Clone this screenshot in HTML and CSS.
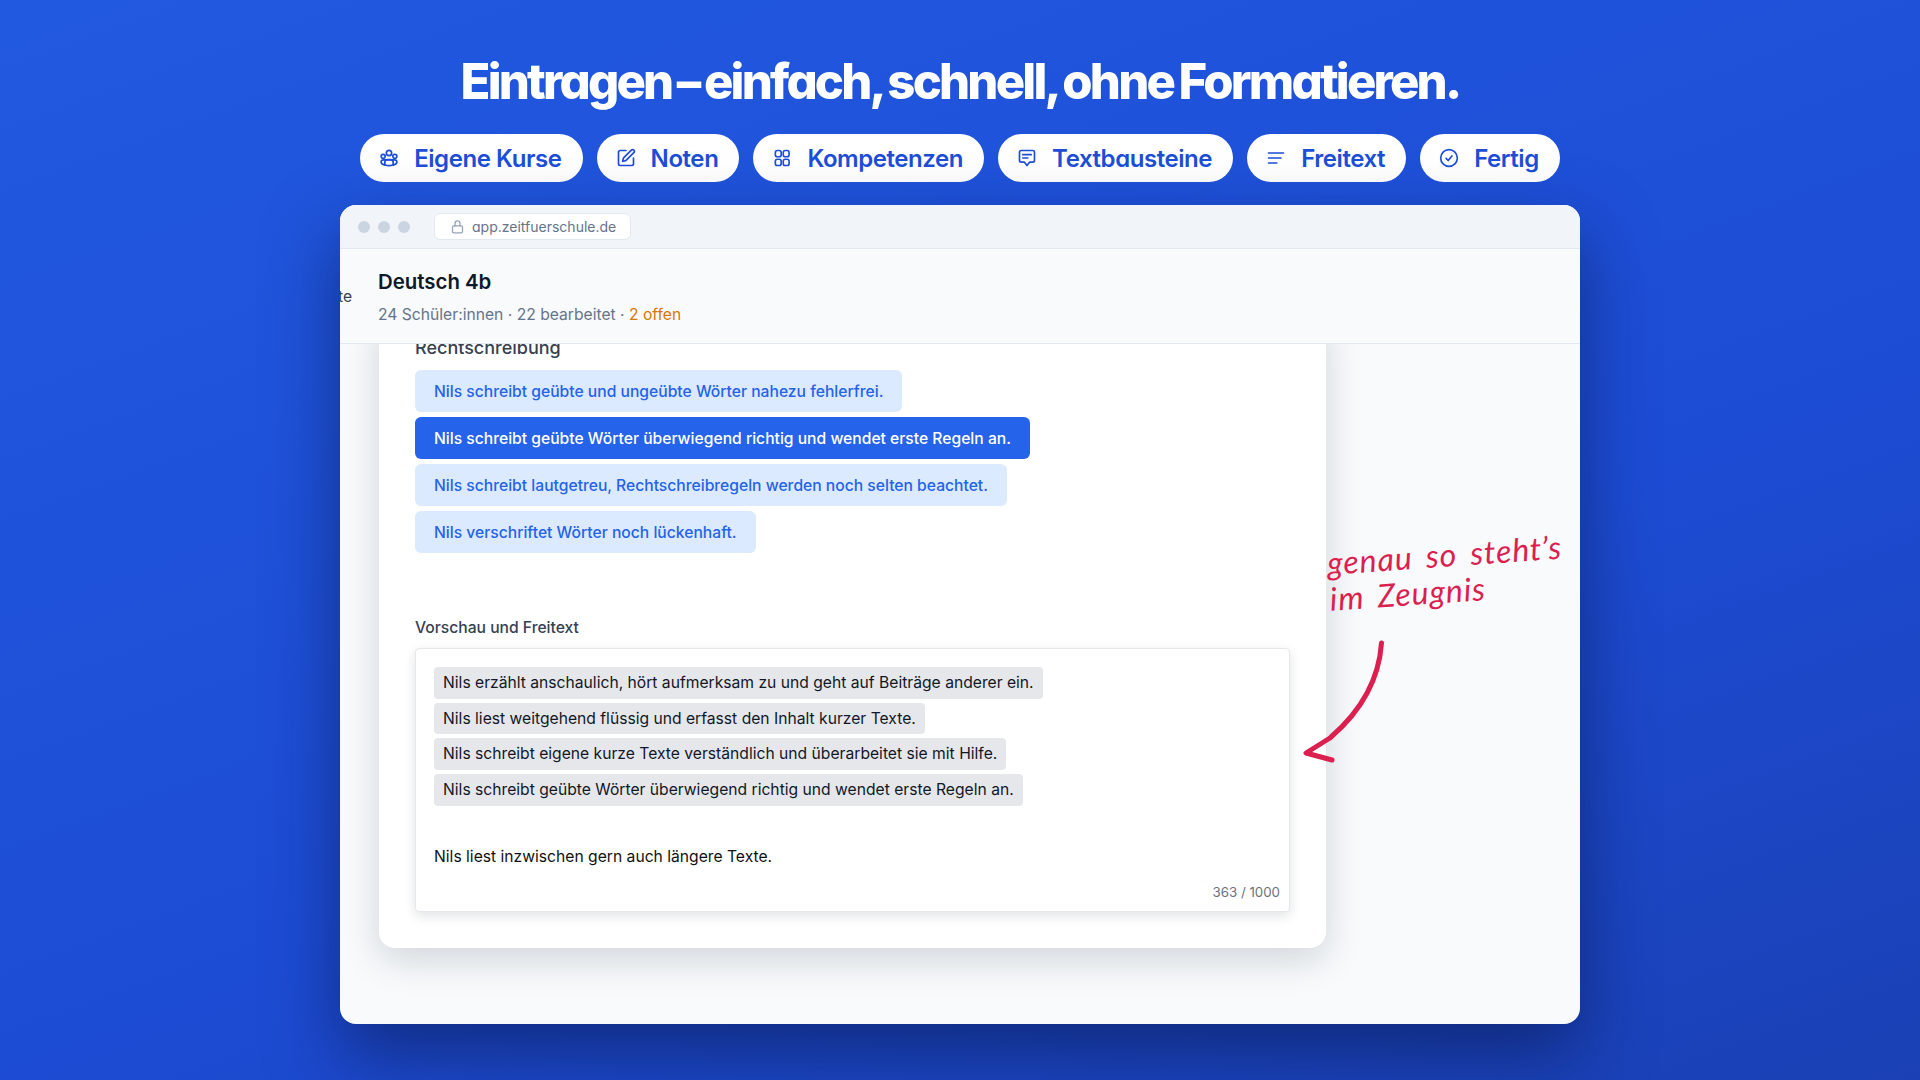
FILE: index.html
```html
<!DOCTYPE html>
<html lang="de">
<head>
  <meta charset="UTF-8">
  <title>Zeit für Schule</title>
  <link rel="stylesheet" href="styles.css">
</head>
<body>
  <h1 class="headline">Eintragen – einfach, schnell, ohne Formatieren.</h1>

  <nav class="steps">
    <span class="step">
      <svg class="step-icon" viewBox="0 0 24 24"><circle cx="12" cy="6" r="3.2"/><circle cx="5" cy="10" r="2.4"/><circle cx="19" cy="10" r="2.4"/><path d="M7 20.5c-2.5-.5-4.5-1.5-4.5-3.6 0-1.6 1.4-2.6 3-2.6h13c1.600 0 3 1 3 2.600 0 2.100-2 3.100-4.500 3.600"/><path d="M7 20v-3a3 3 0 0 1 3-3h4a3 3 0 0 1 3 3v3c-3 1.500-7 1.500-10 0z"/></svg>
      Eigene Kurse
    </span>
    <span class="step">
      <svg class="step-icon" viewBox="0 0 24 24"><path d="M12 3H5a2 2 0 0 0-2 2v14a2 2 0 0 0 2 2h14a2 2 0 0 0 2-2v-7"/><path d="M18.375 2.625a1 1 0 0 1 3 3l-9.013 9.014a2 2 0 0 1-.853.505l-2.873.84a.5.5 0 0 1-.62-.62l.84-2.873a2 2 0 0 1 .506-.852z"/></svg>
      Noten
    </span>
    <span class="step">
      <svg class="step-icon" viewBox="0 0 24 24"><rect x="4" y="3" width="7" height="7.500" rx="2.500"/><rect x="13.500" y="3" width="7" height="7.500" rx="2.500"/><rect x="4" y="13.500" width="7" height="7.500" rx="2.500"/><rect x="13.500" y="13.500" width="7" height="7.500" rx="2.500"/></svg>
      Kompetenzen
    </span>
    <span class="step">
      <svg class="step-icon" viewBox="0 0 24 24"><path d="M5 3h14a2 2 0 0 1 2 2v10a2 2 0 0 1-2 2h-4l-3 4-3-4H5a2 2 0 0 1-2-2V5a2 2 0 0 1 2-2z"/><path d="M7 8h10M7 12h6"/></svg>
      Textbausteine
    </span>
    <span class="step">
      <svg class="step-icon" viewBox="0 0 24 24"><path d="M3 6h18M3 12h15M3 18h10"/></svg>
      Freitext
    </span>
    <span class="step">
      <svg class="step-icon" viewBox="0 0 24 24"><circle cx="12" cy="12" r="10"/><path d="M8.500 12.500l2.500 2.500 4.500-5.500"/></svg>
      Fertig
    </span>
  </nav>

  <main class="window">
    <div class="titlebar">
      <span class="dot"></span>
      <span class="dot"></span>
      <span class="dot"></span>
      <span class="url">
        <svg class="lock" viewBox="0 0 24 24"><rect x="4" y="11" width="16" height="11" rx="2"/><path d="M8 11V7a4 4 0 0 1 8 0v4"/></svg>
        app.zeitfuerschule.de
      </span>
    </div>

    <header class="class-header">
      <span class="side-stub">te</span>
      <div class="class-title">Deutsch 4b</div>
      <div class="class-meta">24 Schüler:innen · 22 bearbeitet · <span class="open-count">2 offen</span></div>
    </header>

    <section class="content">
      <div class="card">
        <div class="group-label">Rechtschreibung</div>
        <div class="options">
          <button class="option">Nils schreibt geübte und ungeübte Wörter nahezu fehlerfrei.</button>
          <button class="option active">Nils schreibt geübte Wörter überwiegend richtig und wendet erste Regeln an.</button>
          <button class="option">Nils schreibt lautgetreu, Rechtschreibregeln werden noch selten beachtet.</button>
          <button class="option">Nils verschriftet Wörter noch lückenhaft.</button>
        </div>

        <div class="preview-label">Vorschau und Freitext</div>
        <div class="preview">
          <div class="chips">
            <span class="chip">Nils erzählt anschaulich, hört aufmerksam zu und geht auf Beiträge anderer ein.</span>
            <span class="chip">Nils liest weitgehend flüssig und erfasst den Inhalt kurzer Texte.</span>
            <span class="chip">Nils schreibt eigene kurze Texte verständlich und überarbeitet sie mit Hilfe.</span>
            <span class="chip">Nils schreibt geübte Wörter überwiegend richtig und wendet erste Regeln an.</span>
          </div>
          <p class="freetext">Nils liest inzwischen gern auch längere Texte.</p>
          <div class="counter">363 / 1000</div>
        </div>
      </div>
    </section>

    <div class="note">genau so steht’s<br>im Zeugnis</div>
    <svg class="note-arrow" viewBox="0 0 90 130">
      <path d="M78.500 4C76 40 58 72 28 98"/>
      <path d="M27 99 3 114 29 121"/>
    </svg>
  </main>
</body>
</html>
```

FILE: styles.css
```css
* {
  box-sizing: border-box;
}
body {
  margin: 0;
  height: 1080px;
  overflow: hidden;
  display: flex;
  flex-direction: column;
  align-items: center;
  font-family: Inter, "Liberation Sans", sans-serif;
  background: linear-gradient(160deg, #2159e0 0%, #1d4cd4 60%, #1a40b4 100%);
}
.headline {
  margin: 50px 0 0;
  height: 64px;
  line-height: 64px;
  font-size: 49px;
  font-weight: 800;
  letter-spacing: -0.057em;
  word-spacing: -2.500px;
  font-feature-settings: "cv11";
  color: #fff;
}
.steps {
  display: flex;
  gap: 14px;
  margin-top: 20px;
}
.step {
  display: flex;
  align-items: center;
  gap: 15px;
  height: 48px;
  padding: 0 21px 0 19px;
  border-radius: 24px;
  background: #fff;
  color: #1d4ed8;
  font-size: 24px;
  font-weight: 600;
  letter-spacing: -0.018em;
  font-feature-settings: "cv11";
}
.step-icon {
  width: 20px;
  height: 20px;
  fill: none;
  stroke: currentColor;
  stroke-width: 2;
  stroke-linecap: round;
  stroke-linejoin: round;
}
.window {
  position: relative;
  width: 1240px;
  height: 819px;
  margin-top: 23px;
  border-radius: 16px;
  overflow: hidden;
  background: #f8fafc;
  box-shadow: 0 30px 70px rgba(8, 20, 70, 0.55);
  display: flex;
  flex-direction: column;
}
.titlebar {
  display: flex;
  align-items: center;
  gap: 8px;
  height: 44px;
  flex: none;
  padding-left: 18px;
  background: #f1f5f9;
  border-bottom: 1px solid #e2e8f0;
}
.dot {
  width: 12px;
  height: 12px;
  border-radius: 50%;
  background: #cbd5e1;
}
.url {
  display: flex;
  align-items: center;
  gap: 7px;
  height: 27px;
  margin-left: 16px;
  padding: 0 14px 0 15px;
  background: #fff;
  border: 1px solid #e2e8f0;
  border-radius: 6px;
  color: #64748b;
  font-size: 14px;
  font-feature-settings: "cv11";
}
.lock {
  width: 15px;
  height: 15px;
  fill: none;
  stroke: #94a3b8;
  stroke-width: 2;
  stroke-linecap: round;
  stroke-linejoin: round;
}
.class-header {
  position: relative;
  flex: none;
  height: 95px;
  padding: 20px 38px 0;
  background: #f8fafc;
  border-bottom: 1px solid #e2e8f0;
  z-index: 1;
}
.side-stub {
  position: absolute;
  left: -2px;
  top: 38px;
  font-size: 15.670px;
  line-height: 20px;
  color: #334155;
}
.class-title {
  font-size: 20.400px;
  line-height: 26px;
  font-weight: 600;
  color: #0f172a;
}
.class-meta {
  margin-top: 8px;
  font-size: 15.670px;
  line-height: 24px;
  color: #64748b;
}
.open-count {
  color: #d97706;
}
.content {
  flex: 1;
  min-height: 0;
  overflow: hidden;
  padding: 0 0 0 39px;
}
.card {
  width: 947px;
  margin-top: -31px;
  padding: 24px 36px 36px;
  background: #fff;
  border-radius: 16px;
  box-shadow: 0 12px 36px rgba(15, 23, 42, 0.16);
}
.group-label {
  font-size: 18px;
  line-height: 22px;
  font-weight: 500;
  color: #374151;
  margin-bottom: 11px;
}
.options {
  display: flex;
  flex-direction: column;
  align-items: flex-start;
  gap: 5px;
}
.option {
  height: 42px;
  padding: 0 19px;
  border: none;
  border-radius: 6px;
  background: #dbeafe;
  color: #2563eb;
  font-family: inherit;
  font-size: 15.670px;
  font-weight: 500;
}
.option.active {
  background: #2563eb;
  color: #fff;
}
.preview-label {
  margin-top: 63px;
  margin-bottom: 8px;
  font-size: 15.670px;
  line-height: 24px;
  font-weight: 500;
  color: #374151;
}
.preview {
  padding: 18px 9px 9px 18px;
  border: 1px solid #e5e7eb;
  border-radius: 4px;
  background: #fff;
  box-shadow: 0 4px 12px rgba(15, 23, 42, 0.12);
}
.chips {
  display: flex;
  flex-direction: column;
  align-items: flex-start;
  gap: 4px;
}
.chip {
  padding: 0 9px;
  line-height: 31.7px;
  border-radius: 4px;
  background: #e5e7eb;
  color: #111827;
  font-size: 15.670px;
}
.freetext {
  margin: 39px 0 0;
  font-size: 15.670px;
  line-height: 24px;
  color: #111;
}
.counter {
  margin-top: 13px;
  text-align: right;
  font-size: 13.300px;
  line-height: 20px;
  color: #6b7280;
}
.note {
  position: absolute;
  left: 986px;
  top: 340px;
  transform: rotate(-4deg);
  transform-origin: left top;
  font-family: Lato, sans-serif;
  font-style: italic;
  font-size: 32px;
  line-height: 36px;
  letter-spacing: 0.03em;
  word-spacing: 0.15em;
  color: #db1f4f;
  white-space: nowrap;
}
.note-arrow {
  position: absolute;
  left: 963px;
  top: 434px;
  width: 90px;
  height: 130px;
  fill: none;
  stroke: #db1f4f;
  stroke-width: 5;
  stroke-linecap: round;
  stroke-linejoin: round;
}
```
